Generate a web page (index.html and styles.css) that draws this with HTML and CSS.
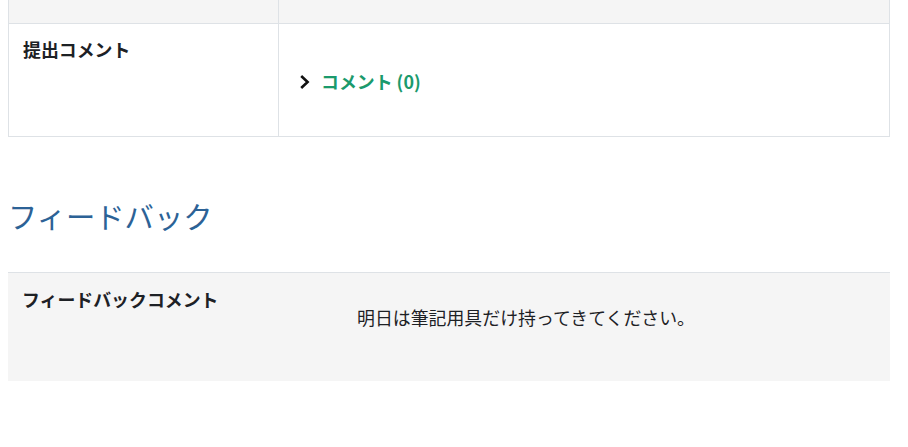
FILE: index.html
```html
<!DOCTYPE html>
<html lang="ja">
<head>
<meta charset="utf-8">
<link rel="stylesheet" href="styles.css">
</head>
<body>
<div class="page">
  <div class="tbl">
    <div class="row row-shaded row-top">
      <div class="cell label"></div>
      <div class="cell value"></div>
    </div>
    <div class="row row-submit">
      <div class="cell label">提出コメント</div>
      <div class="cell value value-center">
        <a class="comment-link" href="#">
          <svg class="chev" width="12" height="16" viewBox="0 0 12 16"><path d="M2.2 2 L8.6 8 L2.2 14" fill="none" stroke="#111" stroke-width="2.6" stroke-linejoin="miter"/></svg>
          <span class="comment-text">コメント (0)</span>
        </a>
      </div>
    </div>
  </div>

  <h2 class="section-title">フィードバック</h2>

  <div class="fb">
    <div class="fb-label">フィードバックコメント</div>
    <div class="fb-value">明日は筆記用具だけ持ってきてください。</div>
  </div>
</div>
</body>
</html>
```

FILE: styles.css
```css
* { box-sizing: border-box; }
html, body { margin: 0; padding: 0; background: #fff; }
body {
  font-family: "Noto Sans CJK JP", "Noto Sans", sans-serif;
  font-size: 17.9px;
  line-height: 26px;
  color: #1d2125;
}
.page {
  width: 882px;
  margin-left: 8px;
}
.tbl {
  border-left: 1px solid #dee2e6;
  border-right: 1px solid #dee2e6;
  border-bottom: 1px solid #dee2e6;
}
.row {
  display: grid;
  grid-template-columns: 270px 1fr;
}
.row-shaded { background: #f5f5f5; }
.row-top {
  height: 24px;
  border-bottom: 1px solid #dee2e6;
}
.row-submit { height: 112px; }
.cell { padding: 12px 14px; }
.row-top .cell { padding: 0; }
.label {
  border-right: 1px solid #dee2e6;
  font-weight: 700;
}
.value-center {
  display: flex;
  align-items: center;
  padding-left: 20px;
  padding-top: 14px;
}
.comment-link {
  display: flex;
  align-items: center;
  gap: 10px;
  text-decoration: none;
}
.chev { display: block; margin-top: 1px; }
.comment-text {
  color: #1b9a6c;
  font-weight: 700;
}
.section-title {
  margin: 58px 0 0 0;
  font-size: 29.3px;
  line-height: 40px;
  font-weight: 400;
  color: #2c6296;
}
.fb {
  margin-top: 37px;
  border-top: 1px solid #dee2e6;
  background: #f5f5f5;
  height: 109px;
  display: grid;
  grid-template-columns: 334px 1fr;
}
.fb-label {
  padding: 13px 14px;
  font-weight: 700;
}
.fb-value {
  padding: 31px 15px 0 15px;
}
```
